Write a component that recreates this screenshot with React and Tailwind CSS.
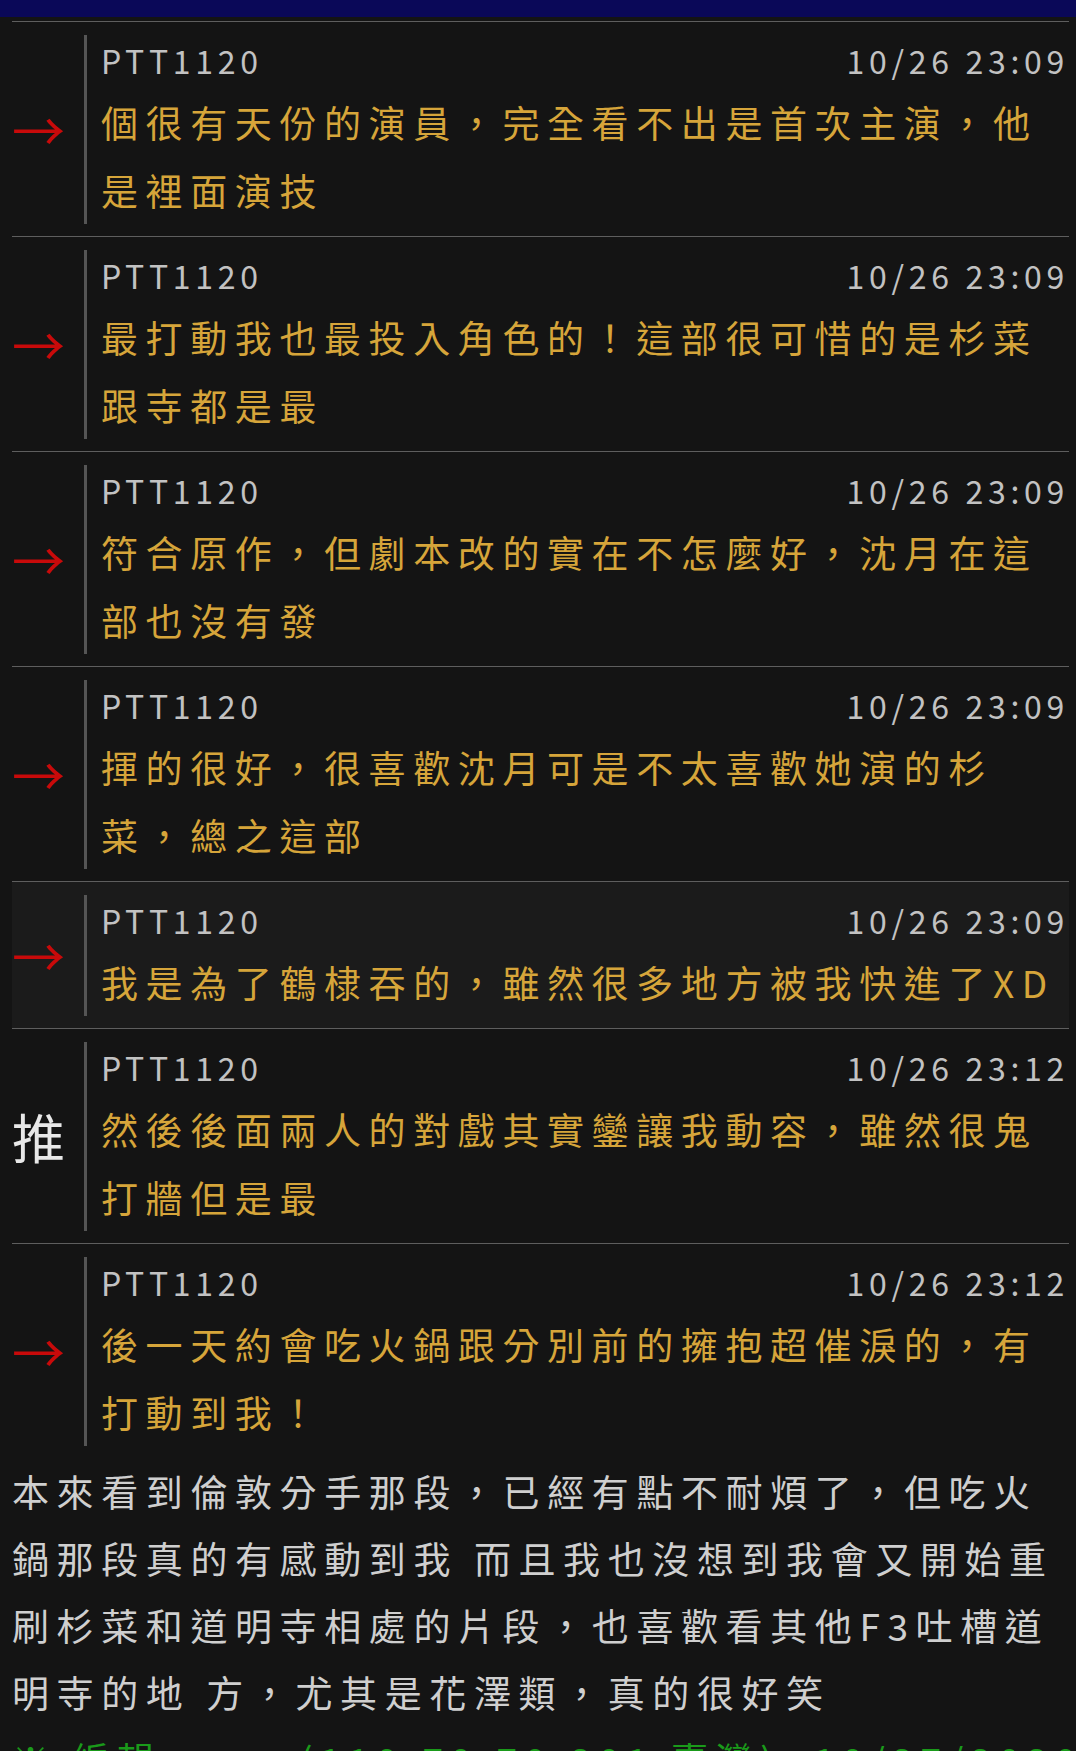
import React from 'react';
import clsx from 'clsx';

const comments = [
  { tag: '→', user: 'PTT1120', time: '10/26 23:09', text: '個很有天份的演員，完全看不出是首次主演，他是裡面演技' },
  { tag: '→', user: 'PTT1120', time: '10/26 23:09', text: '最打動我也最投入角色的！這部很可惜的是杉菜跟寺都是最' },
  { tag: '→', user: 'PTT1120', time: '10/26 23:09', text: '符合原作，但劇本改的實在不怎麼好，沈月在這部也沒有發' },
  { tag: '→', user: 'PTT1120', time: '10/26 23:09', text: '揮的很好，很喜歡沈月可是不太喜歡她演的杉菜，總之這部' },
  { tag: '→', user: 'PTT1120', time: '10/26 23:09', text: '我是為了鶴棣吞的，雖然很多地方被我快進了XD', highlight: true },
  { tag: '推', user: 'PTT1120', time: '10/26 23:12', text: '然後後面兩人的對戲其實鑾讓我動容，雖然很鬼打牆但是最' },
  { tag: '→', user: 'PTT1120', time: '10/26 23:12', text: '後一天約會吃火鍋跟分別前的擁抱超催淚的，有打動到我！' },
];

const Comment = ({ tag, user, time, text, highlight }) => (
  <div
    className={clsx(
      'flex border-t border-[#5e5e5e] pt-[13px] pb-[12px]',
      highlight && 'bg-[#1b1b1b]'
    )}
  >
    <div
      className={clsx(
        'w-[72px] shrink-0 flex items-center text-[53px] leading-none',
        tag === '推' ? 'text-[#e8e8e8]' : 'text-[#c80a0a]'
      )}
    >
      {tag}
    </div>
    <div className="flex-1 border-l-[3px] border-[#555555] pl-[14px]">
      <div className="flex justify-between items-center h-[53px] pb-[4px] text-[32px] tracking-[4.7px] text-[#c2c2c2]">
        <span>{user}</span>
        <span>{time}</span>
      </div>
      <p className="text-[37px] leading-[68px] tracking-[7.6px] text-[#d6a53a]">{text}</p>
    </div>
  </div>
);

export default function App() {
  return (
    <div className="h-[1751px] overflow-hidden bg-[#141414] font-['Noto_Sans_CJK_TC','Noto_Sans',sans-serif]">
      <div className="h-[17px] bg-[#0a0858]" />
      <div className="mt-[4px] ml-3 w-[1057px]">
        {comments.map((c, i) => (
          <Comment key={i} {...c} />
        ))}
      </div>
      <div className="px-3 text-[37px] leading-[67px] tracking-[7.6px]">
        <p className="text-[#cfcfcf]">
          本來看到倫敦分手那段，已經有點不耐煩了，但吃火鍋那段真的有感動到我 而且我也沒想到我會又開始重刷杉菜和道明寺相處的片段，也喜歡看其他F3吐槽道明寺的地 方，尤其是花澤類，真的很好笑
        </p>
        <p className="whitespace-nowrap text-[#1a9a1a]">※ 編輯: nua (110.70.70.201 臺灣), 10/27/2020 00:12:34</p>
      </div>
    </div>
  );
}
